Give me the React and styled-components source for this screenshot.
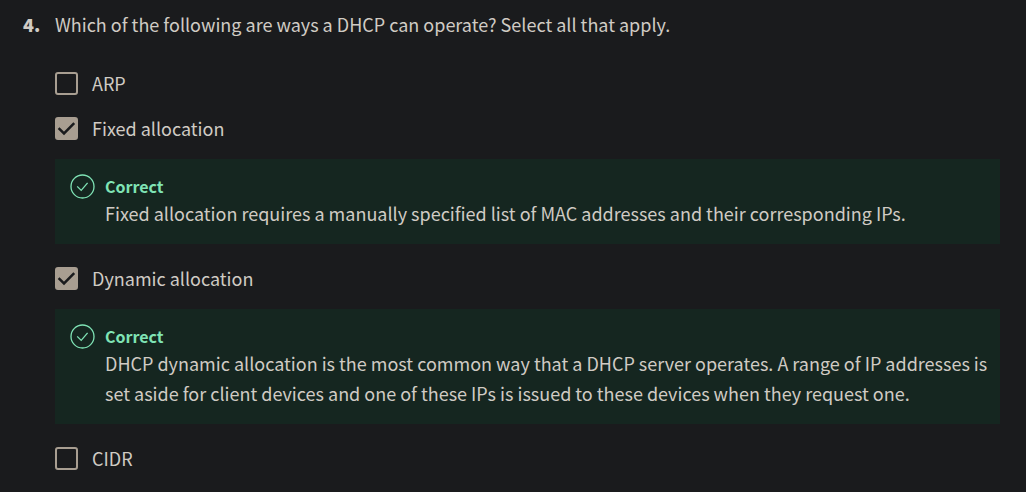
import React from 'react';
import styled, { createGlobalStyle } from 'styled-components';

const GlobalStyle = createGlobalStyle`
  * { box-sizing: border-box; }
  body {
    margin: 0;
    background: #1a1b1d;
    color: #d0cbc4;
    font-family: "Noto Sans CJK SC", "Noto Sans", sans-serif;
    font-size: 18px;
    line-height: 30px;
  }
`;

const Question = styled.section`
  display: grid;
  grid-template-columns: 32px minmax(0, 1fr);
  padding: 9px 26px 16px 23px;
`;

const Number = styled.span`
  font-weight: 900;
`;

const Prompt = styled.p`
  margin: 0 0 29px;
`;

const Options = styled.div`
  grid-column: 2;
  display: flex;
  flex-direction: column;
  gap: 15px;
`;

const Item = styled.div`
  display: flex;
  flex-direction: column;
  align-items: flex-start;
  gap: 16px;
`;

const Option = styled.label`
  display: flex;
  align-items: center;
  gap: 14px;
`;

const CheckFrame = styled.span`
  display: grid;
  width: 23px;
  height: 23px;

  & > * {
    grid-area: 1 / 1;
  }
`;

const CheckInput = styled.input`
  appearance: none;
  width: 23px;
  height: 23px;
  margin: 0;
  border: 2px solid #a89e91;
  border-radius: 3px;

  &:checked {
    background: #a89e91;
  }

  & + svg {
    visibility: hidden;
    pointer-events: none;
  }

  &:checked + svg {
    visibility: visible;
  }
`;

const Feedback = styled.div`
  display: flex;
  align-items: flex-start;
  align-self: stretch;
  gap: 10px;
  padding: 15px 10px 16px 15px;
  margin-bottom: 4px;
  background: #152620;
`;

const FeedbackIcon = styled.svg`
  flex: none;
`;

const FeedbackTitle = styled.h3`
  margin: 0;
  color: #7fe3b5;
  font-size: 16px;
  font-weight: 700;
  line-height: 24px;
`;

const FeedbackText = styled.p`
  margin: 0;
`;

const options = [
  { label: 'ARP' },
  {
    label: 'Fixed allocation',
    checked: true,
    feedback:
      'Fixed allocation requires a manually specified list of MAC addresses and their corresponding IPs.',
  },
  {
    label: 'Dynamic allocation',
    checked: true,
    feedback:
      'DHCP dynamic allocation is the most common way that a DHCP server operates. A range of IP addresses is set aside for client devices and one of these IPs is issued to these devices when they request one.',
  },
  { label: 'CIDR' },
];

function Checkbox({ id, checked }) {
  return (
    <CheckFrame>
      <CheckInput id={id} type="checkbox" defaultChecked={checked} />
      <svg width="23" height="23" viewBox="0 0 23 23" aria-hidden="true">
        <path d="M3.6 11.2 L9 16.4 L19.2 6.2" fill="none" stroke="#1a1b1d" strokeWidth="2.5" />
      </svg>
    </CheckFrame>
  );
}

function CorrectIcon() {
  return (
    <FeedbackIcon width="25" height="25" viewBox="0 0 25 25" fill="none" stroke="#7fe3b5" aria-hidden="true">
      <circle cx="12.5" cy="12.5" r="11.5" strokeWidth="1.3" />
      <path d="M7.2 12.4 L11.2 16.4 L17.6 8.8" strokeWidth="1.3" />
    </FeedbackIcon>
  );
}

export default function App() {
  return (
    <>
      <GlobalStyle />
      <Question>
        <Number>4.</Number>
        <Prompt>Which of the following are ways a DHCP can operate? Select all that apply.</Prompt>
        <Options>
          {options.map(({ label, checked, feedback }, i) => (
            <Item key={label}>
              <Option htmlFor={`option-${i}`}>
                <Checkbox id={`option-${i}`} checked={checked} />
                {label}
              </Option>
              {feedback && (
                <Feedback>
                  <CorrectIcon />
                  <div>
                    <FeedbackTitle>Correct</FeedbackTitle>
                    <FeedbackText>{feedback}</FeedbackText>
                  </div>
                </Feedback>
              )}
            </Item>
          ))}
        </Options>
      </Question>
    </>
  );
}
